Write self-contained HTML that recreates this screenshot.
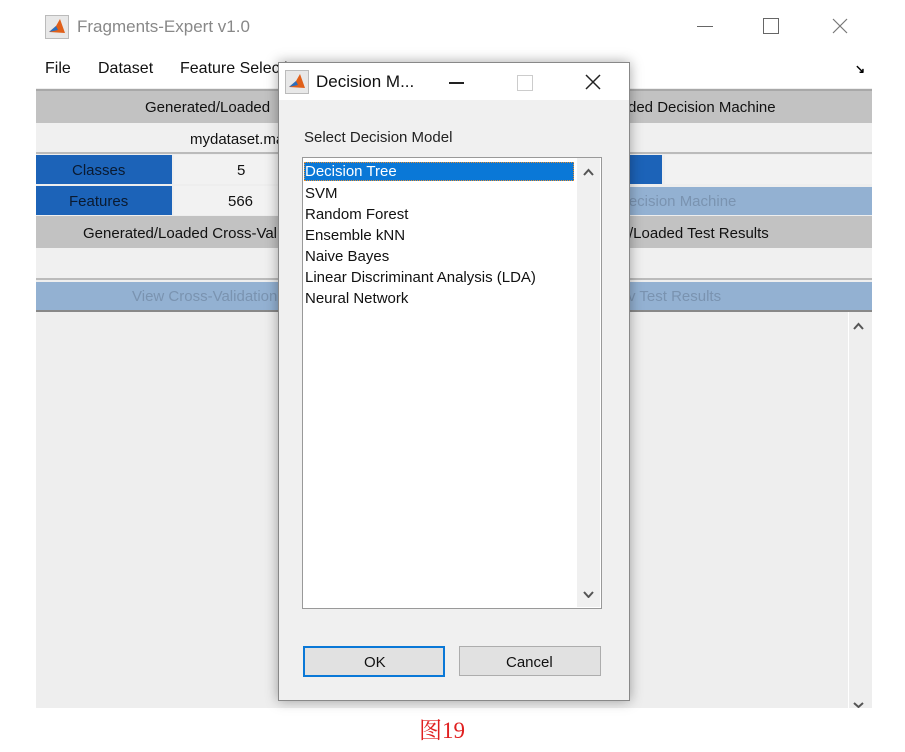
<!DOCTYPE html>
<html><head><meta charset="utf-8"><style>
body{margin:0;width:905px;height:752px;background:#fff;position:relative;overflow:hidden;font-family:"Liberation Sans",Arial,sans-serif;}
.a{position:absolute;}
.s{font-size:15px;color:#111;white-space:nowrap;}
</style></head><body>
<!-- main title -->
<svg class="a" style="left:45px;top:15px" width="24" height="24" viewBox="0 0 24 24"><rect x="0.5" y="0.5" width="23" height="23" fill="#e8e8e8" stroke="#bbb"/><path d="M4 17 L11 11 L15 4 L20 18 Z" fill="#e0601a"/><path d="M4 17 L11 11 L13 15 Z" fill="#2a6fc0"/></svg>
<div class="a" style="left:77px;top:17px;font-size:17px;color:#888">Fragments-Expert v1.0</div>
<div class="a" style="left:697px;top:26px;width:16px;height:1px;background:#666"></div>
<div class="a" style="left:763px;top:18px;width:14px;height:14px;border:1px solid #666"></div>
<svg class="a" style="left:832px;top:18px" width="16" height="16"><path d="M1 1L15 15M15 1L1 15" stroke="#777" stroke-width="1.2"/></svg>
<!-- menu -->
<div class="a" style="left:45px;top:60px;font-size:16px;color:#111">File</div>
<div class="a" style="left:98px;top:60px;font-size:16px;color:#111">Dataset</div>
<div class="a" style="left:180px;top:60px;font-size:16px;color:#111;white-space:nowrap">Feature Selection</div>
<div class="a" style="left:855px;top:62px;font-size:12px;color:#000;font-weight:bold">↘</div>
<!-- main panel -->
<div class="a" style="left:36px;top:88px;width:836px;height:620px;background:#eeeeee"></div>
<div class="a" style="left:36px;top:89px;width:836px;height:2px;background:#a8a8a8"></div>
<div class="a" style="left:36px;top:91px;width:836px;height:32px;background:#c2c2c2"></div>
<div class="a s" style="left:145px;top:99px">Generated/Loaded</div>
<div class="a s" style="left:628px;top:99px">ded Decision Machine</div>
<div class="a" style="left:36px;top:123px;width:836px;height:30px;background:#f0f0f0"></div>
<div class="a s" style="left:190px;top:131px">mydataset.mat</div>
<div class="a" style="left:36px;top:152px;width:836px;height:2px;background:#bbb"></div>
<div class="a" style="left:36px;top:155px;width:136px;height:29px;background:#1c63b8"></div>
<div class="a s" style="left:72px;top:162px;color:#0a1a30">Classes</div>
<div class="a" style="left:174px;top:155px;width:120px;height:29px;background:#f2f2f2"></div>
<div class="a s" style="left:237px;top:162px">5</div>
<div class="a" style="left:600px;top:155px;width:62px;height:29px;background:#1c63b8"></div>
<div class="a" style="left:665px;top:155px;width:207px;height:29px;background:#f2f2f2"></div>
<div class="a" style="left:36px;top:186px;width:136px;height:29px;background:#1c63b8"></div>
<div class="a s" style="left:69px;top:193px;color:#0a1a30">Features</div>
<div class="a" style="left:174px;top:186px;width:120px;height:29px;background:#f2f2f2"></div>
<div class="a s" style="left:228px;top:193px">566</div>
<div class="a" style="left:600px;top:187px;width:272px;height:28px;background:#93b1d2"></div>
<div class="a s" style="left:618px;top:193px;color:#7a93b0">Decision Machine</div>
<div class="a" style="left:36px;top:216px;width:836px;height:32px;background:#c2c2c2"></div>
<div class="a s" style="left:83px;top:225px">Generated/Loaded Cross-Validation</div>
<div class="a s" style="left:626px;top:225px;background:#c2c2c2;padding-left:3px">/Loaded Test Results</div>
<div class="a" style="left:36px;top:248px;width:836px;height:30px;background:#f0f0f0"></div>
<div class="a" style="left:36px;top:278px;width:836px;height:2px;background:#bbb"></div>
<div class="a" style="left:36px;top:282px;width:836px;height:28px;background:#93b1d2"></div>
<div class="a s" style="left:132px;top:288px;color:#7a93b0">View Cross-Validation</div>
<div class="a s" style="left:626px;top:288px;color:#7a93b0;background:#93b1d2;padding-left:2px">v Test Results</div>
<div class="a" style="left:36px;top:310px;width:836px;height:2px;background:#888"></div>
<div class="a" style="left:848px;top:312px;width:1px;height:396px;background:#fff"></div>
<svg class="a" style="left:853px;top:322px" width="11" height="8"><path d="M1 7L5.5 2L10 7" fill="none" stroke="#555" stroke-width="2"/></svg>
<svg class="a" style="left:853px;top:702px" width="11" height="6"><path d="M1 1L5.5 5L10 1" fill="none" stroke="#555" stroke-width="2"/></svg>
<!-- dialog -->
<div class="a" style="left:278px;top:62px;width:350px;height:637px;background:#f0f0f0;border:1px solid #888;box-shadow:0 0 12px rgba(0,0,0,.35)"></div>
<div class="a" style="left:279px;top:63px;width:350px;height:37px;background:#fff"></div>
<svg class="a" style="left:285px;top:70px" width="24" height="24" viewBox="0 0 24 24"><rect x="0.5" y="0.5" width="23" height="23" fill="#e8e8e8" stroke="#bbb"/><path d="M4 17 L11 11 L15 4 L20 18 Z" fill="#e0601a"/><path d="M4 17 L11 11 L13 15 Z" fill="#2a6fc0"/></svg>
<div class="a" style="left:316px;top:72px;font-size:17px;color:#111">Decision M...</div>
<div class="a" style="left:449px;top:82px;width:15px;height:2px;background:#222"></div>
<div class="a" style="left:517px;top:75px;width:14px;height:14px;border:1px solid #ccc"></div>
<svg class="a" style="left:585px;top:74px" width="16" height="16"><path d="M1 1L15 15M15 1L1 15" stroke="#222" stroke-width="1.5"/></svg>
<div class="a s" style="left:304px;top:129px;color:#222">Select Decision Model</div>
<div class="a" style="left:302px;top:157px;width:298px;height:450px;background:#fff;border:1px solid #999"></div>
<div class="a" style="left:577px;top:158px;width:23px;height:449px;background:#f0f0f0"></div>
<svg class="a" style="left:583px;top:168px" width="11" height="8"><path d="M1 7L5.5 2L10 7" fill="none" stroke="#555" stroke-width="2"/></svg>
<svg class="a" style="left:583px;top:591px" width="11" height="7"><path d="M1 1L5.5 6L10 1" fill="none" stroke="#555" stroke-width="2"/></svg>
<div class="a" style="left:304px;top:162px;width:270px;height:19px;background:#0a78d7;border:1px dotted #e89030;box-sizing:border-box"></div>
<div class="a s" style="left:305px;top:163px;color:#fff;line-height:17px">Decision Tree</div>
<div class="a s" style="left:305px;top:183px;line-height:21px">SVM<br>Random Forest<br>Ensemble kNN<br>Naive Bayes<br>Linear Discriminant Analysis (LDA)<br>Neural Network</div>
<div class="a" style="left:303px;top:646px;width:138px;height:27px;background:#e1e1e1;border:2px solid #0a78d7"></div>
<div class="a s" style="left:364px;top:654px">OK</div>
<div class="a" style="left:459px;top:646px;width:140px;height:28px;background:#e1e1e1;border:1px solid #adadad"></div>
<div class="a s" style="left:506px;top:654px">Cancel</div>
<!-- caption -->
<div class="a" style="left:419px;top:712px;font-size:23px;color:#e02020;font-family:'Liberation Serif','Noto Serif CJK SC',serif">图19</div>
</body></html>
